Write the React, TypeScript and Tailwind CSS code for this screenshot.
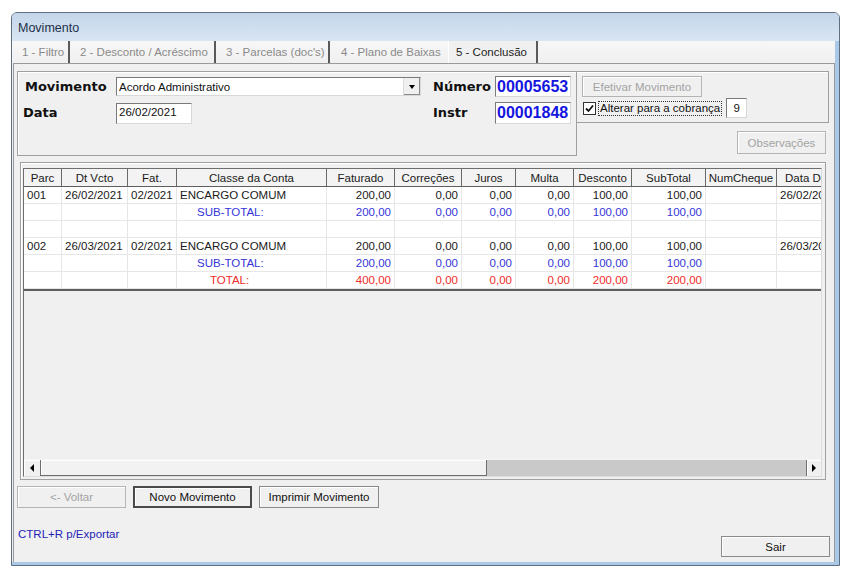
import React from "react";

type Kind = "item" | "sub" | "blank" | "total";

const headers = [
  "Parc",
  "Dt Vcto",
  "Fat.",
  "Classe da Conta",
  "Faturado",
  "Correções",
  "Juros",
  "Multa",
  "Desconto",
  "SubTotal",
  "NumCheque",
  "Data Devolução",
];

const rows: { kind: Kind; cells: string[] }[] = [
  { kind: "item", cells: ["001", "26/02/2021", "02/2021", "ENCARGO COMUM", "200,00", "0,00", "0,00", "0,00", "100,00", "100,00", "", "26/02/2021"] },
  { kind: "sub", cells: ["", "", "", "SUB-TOTAL:", "200,00", "0,00", "0,00", "0,00", "100,00", "100,00", "", ""] },
  { kind: "blank", cells: ["", "", "", "", "", "", "", "", "", "", "", ""] },
  { kind: "item", cells: ["002", "26/03/2021", "02/2021", "ENCARGO COMUM", "200,00", "0,00", "0,00", "0,00", "100,00", "100,00", "", "26/03/2021"] },
  { kind: "sub", cells: ["", "", "", "SUB-TOTAL:", "200,00", "0,00", "0,00", "0,00", "100,00", "100,00", "", ""] },
  { kind: "total", cells: ["", "", "", "TOTAL:", "400,00", "0,00", "0,00", "0,00", "200,00", "200,00", "", ""] },
];

const cols = "grid grid-cols-[38px_66px_49px_150px_68px_67px_54px_58px_58px_74px_71px_80px]";

function Btn({
  children,
  className = "",
  disabled,
  def,
}: {
  children: React.ReactNode;
  className?: string;
  disabled?: boolean;
  def?: boolean;
}) {
  const border = def
    ? "border-2 border-[#4a4a4a]"
    : disabled
      ? "border border-[#b4b4b4]"
      : "border border-[#8a8a8a]";
  return (
    <div
      className={`flex items-center justify-center bg-[#f0f0f0] shadow-[inset_1px_1px_0_#ffffff] text-[11.5px] whitespace-nowrap ${border} ${
        disabled ? "text-[#a3a3a3]" : "text-[#111]"
      } ${className}`}
    >
      {children}
    </div>
  );
}

function Tab({ label, className, active, sep = true }: { label: string; className: string; active?: boolean; sep?: boolean }) {
  return (
    <div
      className={`flex h-full items-end pb-[4px] whitespace-nowrap ${className} ${active ? "text-[#222] bg-[#f0f0f0] border-l border-white" : "text-[#8a8a8a]"} ${
        sep ? "border-r-2 border-r-[#5a5a5a]" : ""
      }`}
    >
      {label}
    </div>
  );
}

function cellClass(i: number, kind: Kind) {
  const right = i >= 4 && i <= 9;
  let color = "text-[#1a1a1a]";
  if (kind === "sub") color = "text-[#3535d8]";
  if (kind === "total") color = "text-[#ee2a2a]";
  let pad = right ? "justify-end pr-[3px]" : "pl-[3px]";
  if (i === 3 && kind === "sub") pad = "pl-[20px]";
  if (i === 3 && kind === "total") pad = "pl-[33px]";
  return `flex items-center h-[17px] border-r border-b border-[#e6e6e6] whitespace-nowrap overflow-hidden ${pad} ${color}`;
}

export default function App() {
  return (
    <div className="w-[850px] h-[576px] bg-white pt-[12px] pl-[11px] font-['Liberation_Sans',Arial,sans-serif] text-[11.5px] leading-[14px] overflow-hidden">
      <div className="w-[829px] h-[554px] flex flex-col border border-[#5f6f82] rounded-t-[6px] overflow-hidden bg-[#f0f0f0]">
        {/* title bar */}
        <div className="h-[28px] shrink-0 flex items-center pl-[6px] pt-[2px] bg-gradient-to-b from-[#c4d6eb] to-[#d9e5f2] text-[12.5px] text-[#1c2f4a]">
          Movimento
        </div>

        <div className="flex-1 flex flex-col border-r-[4px] border-b-[3px] border-r-[#a9c9e6] border-b-[#a9c9e6]">
          {/* tabs */}
          <div className="h-[22px] shrink-0 flex text-[11.5px] bg-gradient-to-b from-[#f7f7f7] to-[#f0f0f0]">
            <Tab label="1 - Filtro" className="w-[58px] pl-[10px]" />
            <Tab label="2 - Desconto / Acréscimo" className="w-[146px] pl-[10px]" />
            <Tab label="3 - Parcelas (doc's)" className="w-[114px] pl-[10px]" />
            <Tab label="4 - Plano de Baixas" className="w-[118px] pl-[11px]" sep={false} />
            <Tab label="5 - Conclusão" className="w-[90px] pl-[7px]" active />
          </div>

          {/* tab page */}
          <div className="flex-1 flex flex-col ml-[1px] border-l border-r border-t border-[#9a9a9a] pl-[3px] pr-[3px]">
            {/* top section */}
            <div className="flex mt-[7px]">
              <div className="w-[560px] h-[85px] border border-[#a0a0a0] shadow-[inset_1px_1px_0_#ffffff] pt-[4px] flex flex-col gap-[5px]">
                <div className="flex items-center h-[21px]">
                  <div className="ml-[7px] w-[91px] font-['DejaVu_Sans',Verdana,sans-serif] font-bold text-[13px] text-[#111]">Movimento</div>
                  <div className="w-[305px] h-[19px] flex bg-white border border-[#7a7a7a] border-r-[#d8d8d8] border-b-[#d8d8d8]">
                    <div className="flex-1 pl-[2px] flex items-center text-[11.5px] text-[#111]">Acordo Administrativo</div>
                    <div className="w-[17px] h-full bg-[#f0f0f0] border-l border-[#dcdcdc] shadow-[inset_-1px_-1px_0_#8a8a8a] flex items-center justify-center">
                      <div className="w-0 h-0 border-l-[3.5px] border-r-[3.5px] border-t-[4px] border-l-transparent border-r-transparent border-t-black" />
                    </div>
                  </div>
                  <div className="w-[12px]" />
                  <div className="w-[62px] font-['DejaVu_Sans',Verdana,sans-serif] font-bold text-[13px] text-[#111]">Número</div>
                  <div className="w-[76px] h-[21px] bg-white border border-[#7a7a7a] border-r-[#d8d8d8] border-b-[#d8d8d8] pl-[1px] flex items-center overflow-hidden text-[16px] font-bold text-[#1515e0]">
                    00005653
                  </div>
                </div>
                <div className="flex items-center h-[22px]">
                  <div className="ml-[5px] w-[93px] font-['DejaVu_Sans',Verdana,sans-serif] font-bold text-[13px] text-[#111]">Data</div>
                  <div className="w-[76px] h-[21px] bg-white border border-[#7a7a7a] border-r-[#d8d8d8] border-b-[#d8d8d8] pl-[2px] pt-[1px] text-[11.5px] text-[#111]">
                    26/02/2021
                  </div>
                  <div className="w-[241px]" />
                  <div className="w-[62px] font-['DejaVu_Sans',Verdana,sans-serif] font-bold text-[13px] text-[#111]">Instr</div>
                  <div className="w-[76px] h-[22px] bg-white border border-[#7a7a7a] border-r-[#d8d8d8] border-b-[#d8d8d8] pl-[1px] flex items-center overflow-hidden text-[16px] font-bold text-[#1515e0]">
                    00001848
                  </div>
                </div>
              </div>

              <div className="w-[252px] flex flex-col">
                <div className="h-[52px] border border-[#a0a0a0] border-l-0 shadow-[inset_0_1px_0_#ffffff] pl-[5px] pt-[4px]">
                  <Btn disabled className="w-[120px] h-[21px]">
                    Efetivar Movimento
                  </Btn>
                  <div className="flex items-center mt-[1px] h-[20px]">
                    <div className="w-[13px] h-[13px] ml-[1px] bg-white border border-[#333] flex items-center justify-center">
                      <svg width="9" height="9" viewBox="0 0 9 9">
                        <path d="M1 4.5 L3.5 7 L8 1.5" fill="none" stroke="#111" strokeWidth="1.8" />
                      </svg>
                    </div>
                    <div className="ml-[3px] px-[1px] outline outline-1 outline-dotted outline-[#333] text-[11.5px] leading-[13px] text-[#111] whitespace-nowrap">
                      Alterar para a cobrança
                    </div>
                    <div className="ml-[5px] w-[21px] h-[20px] bg-white border border-[#7a7a7a] border-r-[#d8d8d8] border-b-[#d8d8d8] flex items-center justify-center text-[11.5px] text-[#111]">
                      9
                    </div>
                  </div>
                </div>
                <div className="flex justify-end mt-[8px] mr-[3px]">
                  <Btn disabled className="w-[89px] h-[23px]">
                    Observações
                  </Btn>
                </div>
              </div>
            </div>

            {/* grid panel */}
            <div className="ml-[3px] mt-[6px] w-[806px] h-[318px] border border-[#a0a0a0] shadow-[inset_1px_1px_0_#ffffff] pt-[5px] pl-[2px] pr-[3px] pb-[2px] flex">
              <div className="flex-1 flex flex-col border border-[#6e6e6e] border-r-[#dcdcdc] border-b-[#dcdcdc] overflow-hidden">
                <div className="flex-1 overflow-hidden bg-[#f0f0f0]">
                  <div className="w-[833px]">
                    <div className={`${cols} h-[18px] bg-[#f3f3f3] border-b border-[#5e5e5e]`}>
                      {headers.map((h, i) => (
                        <div
                          key={h}
                          className={`flex items-center justify-center whitespace-nowrap overflow-hidden text-[#1a1a1a] ${i < headers.length - 1 ? "border-r border-[#6a6a6a]" : "justify-start pl-[8px]"}`}
                        >
                          {h}
                        </div>
                      ))}
                    </div>
                    <div className="bg-white border-b-2 border-[#5e5e5e]">
                      {rows.map((r, ri) => (
                        <div key={ri} className={cols}>
                          {r.cells.map((c, ci) => (
                            <div key={ci} className={cellClass(ci, r.kind)}>
                              {c}
                            </div>
                          ))}
                        </div>
                      ))}
                    </div>
                  </div>
                </div>
                {/* horizontal scrollbar */}
                <div className="h-[17px] shrink-0 flex bg-[#c9c9c9] border-t border-[#f4f4f4]">
                  <div className="w-[17px] bg-[#f0f0f0] border-r border-[#6e6e6e] shadow-[inset_1px_1px_0_#ffffff] flex items-center justify-center">
                    <div className="w-0 h-0 border-t-[4px] border-b-[4px] border-r-[4px] border-t-transparent border-b-transparent border-r-black" />
                  </div>
                  <div className="w-[446px] bg-[#f2f2f2] border-r border-b border-[#6e6e6e] shadow-[inset_1px_1px_0_#ffffff]" />
                  <div className="flex-1" />
                  <div className="w-[15px] bg-[#f0f0f0] border-l border-[#6e6e6e] shadow-[inset_1px_1px_0_#ffffff] flex items-center justify-center">
                    <div className="w-0 h-0 border-t-[4px] border-b-[4px] border-l-[4px] border-t-transparent border-b-transparent border-l-black" />
                  </div>
                </div>
              </div>
            </div>

            {/* buttons */}
            <div className="flex gap-[7px] mt-[6px]">
              <Btn disabled className="w-[109px] h-[22px]">
                &lt;- Voltar
              </Btn>
              <Btn def className="w-[119px] h-[22px]">
                Novo Movimento
              </Btn>
              <Btn className="w-[120px] h-[22px]">Imprimir Movimento</Btn>
            </div>

            <div className="flex justify-between">
              <div className="mt-[19px] ml-[1px] text-[11.5px] text-[#2323b8]">CTRL+R p/Exportar</div>
              <Btn className="mt-[28px] mr-[1px] w-[109px] h-[21px]">Sair</Btn>
            </div>
          </div>
        </div>
      </div>
    </div>
  );
}
